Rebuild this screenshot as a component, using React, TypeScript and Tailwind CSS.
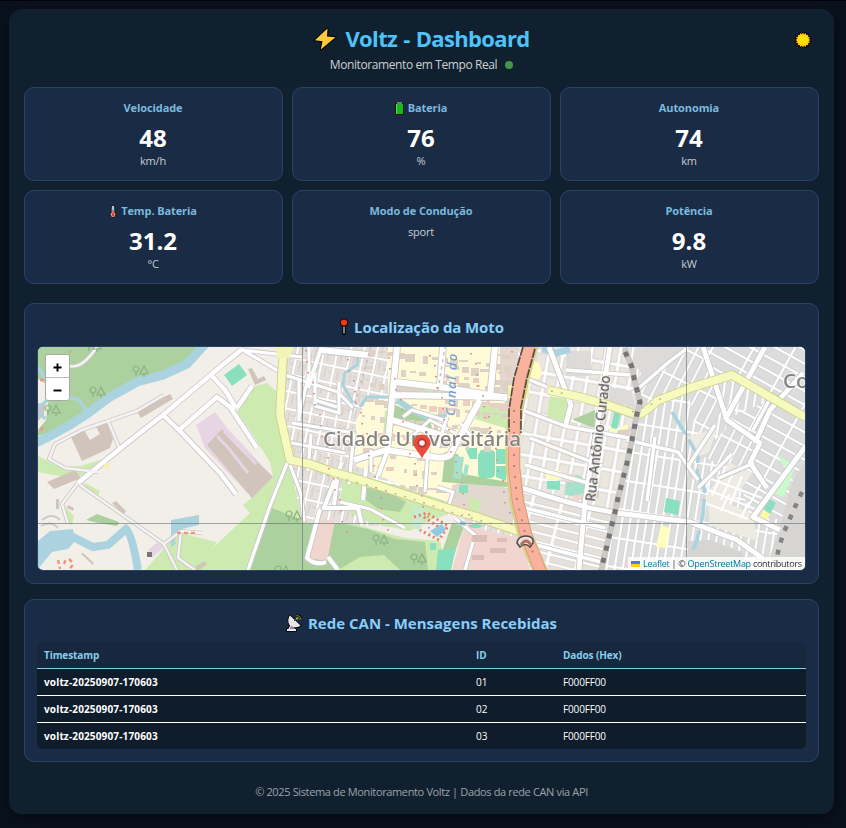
import type { ReactNode } from "react";

const outline = { stroke: "#000", strokeWidth: 2.4, strokeLinejoin: "round" as const, paintOrder: "stroke" as const };

function Bolt() {
  return (
    <svg className="h-6 w-6 shrink-0" viewBox="0 0 24 24">
      <path d="M14.500 1.500 1.800 13.200 9.500 14.200 7.800 22.500 22.500 10.200 14 9.400Z" fill="#ffc83d" {...outline} strokeWidth={2.2} />
    </svg>
  );
}

function Sun() {
  const points = Array.from({ length: 32 }, (_, i) => {
    const r = i % 2 ? 5.9 : 7.6;
    const a = (i * Math.PI) / 16;
    return `${9 + r * Math.cos(a)},${9 + r * Math.sin(a)}`;
  }).join(" ");
  return (
    <svg className="h-[18px] w-[18px]" viewBox="0 0 18 18">
      <polygon points={points} fill="#ffb900" {...outline} strokeWidth={1.8} />
      <circle cx="9" cy="9" r="5.4" fill="#ffe000" />
    </svg>
  );
}

function Battery() {
  return (
    <svg className="h-[13px] w-[9px]" viewBox="0 0 9 13">
      <rect x="0" y="1" width="9" height="12" rx="1" fill="#151515" />
      <rect x="2" y="0" width="5" height="2" fill="#777" />
      <rect x="1" y="2" width="7" height="10" fill="#16b91c" />
      <path d="M1.500 2v10" stroke="#5fd85f" />
    </svg>
  );
}

function Thermometer() {
  return (
    <svg className="h-[13px] w-[8px]" viewBox="0 0 8 13">
      <path d="M2.200 2a1.800 1.500 0 0 1 3.600 0v5.800a2.700 2.700 0 1 1-3.600 0Z" fill="#eee" stroke="#111" strokeWidth="1" />
      <path d="M4 2v3" stroke="#52c7e8" strokeWidth="1.500" />
      <path d="M4 5v5" stroke="#e8382c" strokeWidth="1.500" />
      <circle cx="4" cy="10" r="1.700" fill="#e8382c" />
    </svg>
  );
}

function PushPin() {
  return (
    <svg className="h-[18px] w-[10px]" viewBox="0 0 10 18">
      <path d="M5 7v8.500" stroke="#000" strokeWidth="3.400" strokeLinecap="round" />
      <path d="M5 7v8.500" stroke="#aaa" strokeWidth="1.500" />
      <circle cx="5" cy="4.500" r="3.700" fill="#f03a17" stroke="#000" />
    </svg>
  );
}

function Dish() {
  return (
    <svg className="h-[18px] w-[17px]" viewBox="0 0 17 18">
      <path d="M4 1.500C1.500 5 2 9.500 4.200 11.500L2.300 15H1v2h9v-2H8.500L8 13c2.500.5 5 0 6.500-1.500Z" fill="#e6e6e6" {...outline} strokeWidth={1.600} />
      <path d="m5 12 3 1 .4 2H3.500Z" fill="#998a87" />
      <path d="m8 7 3-3" stroke="#555" />
      <circle cx="11" cy="4.600" r="1" fill="#c8c52a" />
      <path d="M10.500 1.200c3 0 5 1.800 5 4.800" fill="none" stroke="#111" strokeWidth="2.200" />
      <path d="M10.500 1.500c2.800 0 4.500 1.700 4.500 4.500M11 3.200c1.400.1 2.100.9 2.200 2.300" fill="none" stroke="#75831e" />
    </svg>
  );
}

type P = { d: string; c: string; w?: number };

const areas: P[] = [
  { c: "#add19e", d: "M38 347H203L187 362 163 373 137 380 110 395 87 412 70 423 50 433 38 436Z" },
  { c: "#f2efe9", d: "M38 379 50 386 46 420 38 430Z" },
  { c: "#d0c4bb", d: "M38 403 45 405 44 415 38 421Z" },
  { c: "#cdebb0", d: "M38 456 60 467 80 466 104 459 95 473 70 478 38 472Z" },
  { c: "#cdebb0", d: "M252 387 267 383 277 392 277 418 287 455 297 482 302 520V570H207V553L250 513 243 505 253 497 273 477 270 462 253 435 237 412Z" },
  { c: "#cdebb0", d: "M145 570 167 545 178 532 196 537 217 542 207 555 220 570Z" },
  { c: "#add19e", d: "M272 508 302 520V570H248Z" },
  { c: "#add19e", d: "M86 520 97 514 119 522 117 526 98 523Z" },
  { c: "#cdebb0", d: "M83 482 100 491 98 496 86 488ZM63 505 74 516 72 525 67 523Z" },
  { c: "#88e0be", d: "M224 375 239 364 247 375 232 386Z" },
  { c: "#e8d5e4", d: "M196 425 215 412 227 428 273 477 252 498 205 448Z" },
  { c: "#e8d5e4", d: "M148 550 158 542 164 547 152 558Z" },
  { c: "#d0c4bb", d: "M207 445 222 429 273 477 252 498ZM248 369 252 368 258 379 264 376 266 380 255 385Z" },
  { c: "#d0c4bb", d: "M71 437 84 430 90 440 100 434 95 425 106 420 113 439 110 448 82 461Z" },
  { c: "#d0c4bb", d: "M47 482 75 470 81 478 54 489ZM137 412 170 394 173 399 141 418ZM112 503 116 501 126 511 123 515Z" },
  { c: "#d0c4bb", d: "M56 499h3v10h-3ZM68 505l6 3-1 3-6-3ZM83 553l11 10-1 2-12-11ZM195 567l9-6 3 3-9 7Z" },
  { c: "#aad3df", d: "M171 520 199 515V525L182 529 174 536 176 544 171 547ZM38 541 50 531 73 529 75 541 68 549 52 552 38 569Z" },
];

const urban: P[] = [
  { c: "#fffbd9", d: "M356 420 366 402 388 398V347H510V434L513 500 480 512 420 493 356 466Z" },
  { c: "#e3d8cf", d: "M452 485 475 479 511 489 513 529 452 506ZM500 347h18v50h-18Z" },
  { c: "#cdebb0", d: "M343 480 350 471 383 482 440 499 452 512 430 520 410 531 371 523 340 508Z" },
  { c: "#add19e", d: "M367 488 383 488 406 502 400 512 378 509 366 500Z" },
  { c: "#cdebb0", d: "M302 523 350 523 405 538 440 541 447 570H302Z" },
  { c: "#add19e", d: "M302 524 340 523 368 529 395 539 425 542 428 570H400L384 555 360 557 338 570H302Z" },
  { c: "#f1d6d0", d: "M319 519 335 521 327 561 308 558ZM464 526 520 538 530 570H452Z" },
  { c: "#c8ebcf", d: "M414 506 426 510 420 532 411 525Z" },
  { c: "#add19e", d: "M393 404 430 420 433 432 393 419ZM445 452 458 454 463 474 508 482V487L442 482ZM452 523 464 526 449 570H436Z" },
  { c: "#cdebb0", d: "M482 404 508 403 508 429 475 419ZM397 383 449 388 463 394 397 391ZM385 411h6v25h-8ZM470 497l12 4-3 11-10-3Z" },
  { c: "#88e0be", d: "M481 450h10q4 0 4 4v19q0 5-5 5h-7q-5 0-5-5v-18ZM496 449h10v15h-10ZM496 466h10v15l-10-4ZM465 448h12v11h-7ZM459 485h9v8h-9ZM438 550 456 548 451 570H436ZM472 523 482 525 480 528 471 528ZM430 543h6v7h-6Z" },
  { c: "#a7e1cc", d: "M455 456 464 457 461 479 453 478ZM465 464l4 1-2 12-4-2Z" },
  { c: "#cdebb0", d: "M550 396 572 400 571 423 547 417Z" },
  { c: "#add19e", d: "M574 419 595 410 597 429 573 420Z" },
  { c: "#88e0be", d: "M614 412 621 413 617 429 611 428ZM547 481 560 481 560 490 547 489ZM666 498 680 501 678 515 664 512Z" },
  { c: "#a7e1cc", d: "M566 475 579 475 586 481 586 491 578 497 565 495Z" },
  { c: "#f1d6d0", d: "M566 474h9v8h-9ZM573 495h10v5h-10Z" },
  { c: "#fffec0", d: "M546 468 561 471 561 480 546 479ZM610 427 617 430 627 424 629 434 608 435ZM661 525 670 528 666 548 656 547ZM531 360l8 3 3 12-8 8-7-4Z" },
  { c: "#ded0c7", d: "M618 430 631 429 628 437 616 436ZM588 491h11v7h-11Z" },
  { c: "#c8facc", d: "M777 455 795 465 791 479 784 497 773 493 785 469Z" },
  { c: "#88e0be", d: "M768 498 776 503 770 514 763 508Z" },
  { c: "#fffaa0", d: "M763 510 770 514 767 520 760 517Z" },
];

const roads: P[] = [
  { w: 4.4, c: "#fff", d: "M78 483 122 447 163 415 220 367 241 350M163 415 180 431 220 473 236 494M178 431 217 397 230 407 257 448M211 375 225 390 236 408M237 408 252 386" },
  { w: 2.4, c: "#f6f4f2", d: "M80 485 117 511 164 544 177 570M78 483 62 504 68 524M98 472 65 468 49 459 55 444 82 430 137 411 164 395M108 421 119 447M164 544 181 531 178 558 195 570M182 531 202 533M70 366Q82 369 97 347" },
  { w: 3.2, c: "#fff", d: "M241 349 285 375 338 392 355 410M242 350 302 357M288 461 270 506 248 570M290 465 301 494 304 521M309 347V373L299 417M292 423 354 433 349 484M315 373V406L339 413V382M315 400 337 407M299 379V421M286 442 345 453M311 434 308 471" },
  { w: 4, c: "#fff", d: "M321 348 308 388M342 462 324 508 358 508 362 525M334 505 337 480M320 509 307 558Q316 566 326 562M328 557 338 570M378 476 387 452M366 468 363 500" },
  { w: 6, c: "#fff", d: "M397 347 387 452M443 347 440 385M495 347 490 397M396 382 447 388 507 398M395 395 507 397M480 400 450 455Q444 459 433 457L386 450 354 460M392 420 448 437M320 350 368 355" },
  { w: 3, c: "#fff", d: "M403 417 412 410 444 420M410 438 430 420 455 433M447 417 438 447M460 423 472 437M428 450 425 492M437 487 453 492 447 511M371 450V472M455 518 475 535 465 570M340 502 370 509 405 528" },
  { w: 4.8, c: "#fff", d: "M522 488 560 500 590 508 617 513 690 522 737 540 765 560 785 570M703 347 727 420 760 443 750 463 767 488M765 347 725 420M805 447 753 517 780 530M610 347 585 502 579 570M549 347 571 405 565 427M803 373 770 410 755 443" },
  { w: 3.4, c: "#fff", d: "M525 411 565 426 629 438M525 378 547 387M566 370 630 375M633 393 670 361 685 350M530 438 602 466M525 465 595 485M627 440 678 452 698 480M754 463 719 478M732 454 698 488M715 425 687 468M753 430 771 397M655 437 647 501M522 507 605 528M521 541 601 562" },
];

const secondary: P[] = [
  { w: 7.6, c: "#f7fabf", d: "M284 345 282 372 280 415 290 460 310 464 333 472 367 482 413 497 447 508 480 518 518 531M548 390 580 397 608 405 637 415Q646 412 657 401L690 388 732 375 805 417" },
];

const speckles = Array.from({ length: 130 }, (_, i) => ({
  x: 360 + ((i * 47) % 148),
  y: 349 + ((i * 71) % 148),
  w: 3 + ((i * 5) % 9),
  h: 2 + ((i * 3) % 7),
  fill: i % 5 === 0 ? "#ead0c4" : "#ddd2c4",
}));

const dots = Array.from({ length: 90 }, (_, i) => ({
  x: 305 + ((i * 61) % 210),
  y: 350 + ((i * 83) % 183),
}));

function Roads({ list, casing }: { list: P[]; casing: string }) {
  return (
    <g fill="none" strokeLinejoin="round">
      {list.map((r) => <path key={r.d} d={r.d} stroke={casing} strokeWidth={(r.w ?? 3) + 1.8} />)}
      {list.map((r) => <path key={r.d + "f"} d={r.d} stroke={r.c} strokeWidth={r.w} />)}
    </g>
  );
}

function Tree({ x, y }: { x: number; y: number }) {
  return <path transform={`translate(${x} ${y})`} d="M3 10V5M3 6a3 3 0 1 1 .1 0M11 11V7M11 0l-4 8h8Z" fill="none" stroke="#8bb082" strokeWidth="1.200" />;
}

function MapDrawing() {
  return (
    <svg className="block h-full w-full" viewBox="38 347 767 223" preserveAspectRatio="none">
      <defs>
        <pattern id="blocksWest" width="13" height="17" patternUnits="userSpaceOnUse" patternTransform="rotate(12)">
          <rect width="13" height="17" fill="#fff" />
          <rect x="1.500" y="1.500" width="10" height="14" fill="#e5e0dc" stroke="#d3cfcb" strokeWidth=".7" />
          <path d="M5 3v10M8 6h3" stroke="#d2c8c0" />
        </pattern>
        <pattern id="blocksMid" width="14" height="21" patternUnits="userSpaceOnUse" patternTransform="rotate(10)">
          <rect width="14" height="21" fill="#fff" />
          <rect x="2" y="2" width="10" height="17" fill="#ebe6df" stroke="#d2d0cf" strokeWidth=".9" />
        </pattern>
        <pattern id="blocksSouth" width="29" height="9" patternUnits="userSpaceOnUse" patternTransform="rotate(14)">
          <rect width="29" height="9" fill="#fff" />
          <rect x="2" y="1.500" width="25" height="6" fill="#e5e0da" stroke="#d2d0cf" strokeWidth=".7" />
        </pattern>
        <pattern id="blocksRail" width="8" height="29" patternUnits="userSpaceOnUse" patternTransform="rotate(9)">
          <rect width="8" height="29" fill="#fff" />
          <rect x="1.300" y="1.500" width="5.200" height="26" fill="#dddddc" stroke="#cecece" strokeWidth=".6" />
        </pattern>
        <pattern id="blocksEast" width="36" height="12" patternUnits="userSpaceOnUse" patternTransform="rotate(29)">
          <rect width="36" height="12" fill="#fff" />
          <rect x="1.500" y="1.500" width="33" height="9" fill="#dcdcdc" stroke="#cccccc" strokeWidth=".7" />
        </pattern>
        <pattern id="blocksSteep" width="30" height="10" patternUnits="userSpaceOnUse" patternTransform="rotate(117)">
          <rect width="30" height="10" fill="#fff" />
          <rect x="1.500" y="1.300" width="27" height="7.400" fill="#dddddc" stroke="#cccccc" strokeWidth=".7" />
        </pattern>
        <filter id="soft"><feGaussianBlur stdDeviation=".75" /></filter>
        <filter id="softLabel"><feGaussianBlur stdDeviation=".5" /></filter>
      </defs>
      <rect x="38" y="347" width="767" height="223" fill="#f2efe9" />
      <g filter="url(#soft)">
        {areas.map((a) => <path key={a.d} d={a.d} fill={a.c} />)}
        <path d="M217 436 230 450 248 473M224 431 256 464" fill="none" stroke="#e8d5e4" strokeWidth="3" />
        <g fill="none" stroke="#aad3df">
          <path d="M208 341 187 364 163 375 137 382 110 397 87 414 70 425 50 436 36 443" strokeWidth="9" />
          <path d="M38 408 50 398H72L79 400 87 412M38 410 45 419M38 367 45 378" strokeWidth="3.500" />
          <path d="M71 536 93 547 108 545 126 529Q132 534 138 570" strokeWidth="8" />
        </g>
        <path d="M284 347H525L513 500 545 573H500L460 512 400 527 302 523 290 462 280 415Z" fill="url(#blocksWest)" />
        <path d="M525 347H650L637 410 600 570H540L515 500 513 438Z" fill="url(#blocksMid)" />
        <path d="M516 487 620 514 602 570H541Z" fill="url(#blocksSouth)" />
        <path d="M630 347H805V570H600L637 414Z" fill="url(#blocksRail)" />
        <path d="M690 347H805V520L750 518 724 420 770 400 732 375 709 381Z" fill="url(#blocksEast)" />
        <path d="M636 347H702L722 412 700 440 687 390 643 404ZM730 425 758 443 742 475 700 455Z" fill="url(#blocksSteep)" />
        <path d="M566 351h25v25h-25ZM601 385 631 391 636 408 604 400ZM642 347h43l-38 34-15-20Z" fill="#dcdbda" />
        <path d="M728 462 752 473 729 507 704 500ZM688 437 717 428 709 452 695 458ZM707 496 752 513 758 541 710 525Z" fill="#eeebe3" />
        <path d="M793 480 805 461V570H765L775 542ZM688 541 710 540 742 552 750 570H688Z" fill="#d7d5d3" />
        <path d="M702 502 748 519M706 489 755 509M711 479 762 498M721 511 729 494M740 519 749 502M718 464 704 491M726 466 712 495M734 470 721 500M742 476 730 505" stroke="#fff" strokeWidth="2" />
        {urban.map((a) => <path key={a.d} d={a.d} fill={a.c} />)}
        {speckles.map((s, i) => <rect key={i} x={s.x} y={s.y > 445 && s.x > 438 ? s.y - 92 : s.y} width={s.w} height={s.h} fill={s.fill} />)}
        <g fill="none" stroke="#aad3df" strokeWidth="3">
          <path d="M358 355 357 365 345 373 343 385 353 403M360 407 367 397 400 397" />
          <path d="M397 400 415 412 430 418 447 417" strokeWidth="6" />
          <path d="M542 349 556 353 570 349" strokeWidth="7" />
          <path d="M672 412 685 433 693 447 698 457 697 473 705 490 703 515 697 540 693 550" strokeWidth="3.500" strokeDasharray="26 6" />
        </g>
        <Roads list={roads} casing="#cbc9c9" />
        <path d="M353 410 371 347M438 390 445 347" stroke="#c7bac4" strokeWidth="1.500" strokeDasharray="3 4" />
        <Roads list={secondary} casing="#cfd08c" />
        <path d="M275 347h18l-3 11h-13ZM508 385h12v28h-10ZM521 379h8v18l-8 5Z" fill="#f1f4b5" />
        <path d="M327 475 367 485 413 499 447 511 500 526M632 412 650 405 662 398M551 391 566 394" fill="none" stroke="#bfb88b" strokeWidth="1.500" strokeDasharray="2 8" />
        <path d="M531 345 522 378 516 408 513 438V468L517 502 525 535 542 575" fill="none" stroke="#d8cf8a" strokeWidth="15" />
        <path d="M529 345 520 378 515 408 514 438V468L518 502 526 535 542 575" fill="none" stroke="#dd937e" strokeWidth="12" />
        <path d="M529 345 520 378 515 408 514 438V468L518 502 526 535 542 575" fill="none" stroke="#f9b29c" strokeWidth="10.500" />
        <path d="M523 347 514 378 509 410V432M535 349 527 378 521 407V433" fill="none" stroke="#54493f" strokeWidth="1.600" strokeDasharray="9 1.500" />
        <path d="M514 410V465L517 500 525 533 534 555" fill="none" stroke="#bc8076" strokeWidth="2" strokeDasharray="2 9" />
        <path d="M517 543q1-7 9-7t7 7l-3 4q-5-5-10 0Z" fill="#e9e3df" stroke="#4d4947" strokeWidth="1.500" />
        <path d="M521 545q5-8 10 0" fill="none" stroke="#b86c5c" strokeWidth="3" />
        <path d="M625 348 627 355 632 367 634 378 640 402 637 414 632 440 627 463 618 498 615 512 609 537 603 562 601 572" fill="none" stroke="#cbc7c5" strokeWidth="6" />
        <path d="M625 352 632 367 634 378 640 402 637 414 632 440 627 463 618 498 615 512 609 537 603 562 601 572" fill="none" stroke="#777575" strokeWidth="5" strokeDasharray="5 7.500" />
        <path d="M802 492 795 507 784 532 779 547 775 568" fill="none" stroke="#858383" strokeWidth="4.500" strokeDasharray="5 7.500" />
        {dots.map((d, i) => <rect key={i} x={d.x} y={d.y} width="2" height="1.500" fill={i % 3 ? "#f2947c" : "#bd9cbb"} />)}
        <path d="M414 517 427 513 448 526 439 540 420 530M424 517 443 530" fill="none" stroke="#e88067" strokeWidth="3" strokeDasharray="2 3" />
        <path d="M430 531l12-7 4 6-9 7ZM460 521l6 1-1 4-5-1Z" fill="#8fcbe1" />
        <path d="M472 535h15v7h-15ZM490 548h16v5h-16ZM472 555h12v5h-12ZM497 538h10v4h-10Z" fill="#d9bfb8" />
        <path d="M177 533h20M40 430l4-3M40 380h4M69 352h2M58 560l2 9M64 564l2-5M69 559l4 4M70 568l3-3" stroke="#ee967f" strokeWidth="2.500" strokeDasharray="4 3" />
        <path d="M42 520Q52 512 60 520M41 526Q51 520 58 528" fill="none" stroke="#ccc" strokeWidth="2" />
        <path d="M147 552h5v5h-5Z" fill="#777" />
        <Tree x={90} y={387} /><Tree x={45} y={405} /><Tree x={133} y={366} /><Tree x={86} y={341} /><Tree x={286} y={511} /><Tree x={275} y={566} /><Tree x={373} y={535} /><Tree x={411} y={554} />
        <path d="M103 464l4-1 3 4-3 3Z" fill="#f5f2a8" />
      </g>
      <g fontFamily="'Noto Sans', sans-serif" fontWeight="500" paintOrder="stroke" stroke="#fff" strokeOpacity=".6" strokeWidth="2.500" strokeLinejoin="round" filter="url(#softLabel)">
        <text x="323" y="446" fontSize="20.500" textLength="198" fill="#868380">Cidade Universitária</text>
        <text x="783" y="388" fontSize="20.500" fill="#868380">Co</text>
        <text transform="translate(595 502) rotate(-83)" fontSize="13.500" textLength="127" fill="#575452" strokeWidth="2">Rua Antônio Curado</text>
        <text transform="translate(455 416) rotate(-88)" fontSize="13" fontStyle="italic" textLength="76" fill="#6794c5" strokeWidth="1">Canal do C</text>
      </g>
      <path d="M302.500 347v223M686.500 347v223M38 523.500h767" stroke="#6d7777" strokeOpacity=".65" strokeWidth="1" />
      <path d="M422 458.500C420 453 413.500 448.500 413.500 443a8.500 8.500 0 0 1 17 0c0 5.500-6.500 10-8.500 15.500Z" fill="#e74c3c" />
      <circle cx="422" cy="443" r="4.700" fill="#c0392b" />
      <circle cx="422" cy="443" r="2.800" fill="#eef0f1" />
    </svg>
  );
}

function Card({ title, icon, value, unit }: { title: string; icon?: ReactNode; value?: string; unit: string }) {
  return (
    <div className="h-[94px] rounded-[10px] border border-[#2a4365] bg-[#1a2c45] pr-px pt-3 text-center">
      <h3 className="flex h-4 items-center justify-center gap-1 text-[11px] font-bold leading-4 tracking-[-0.1px] text-[#7bb9de]">
        {icon}<span>{title}</span>
      </h3>
      {value && <p className="mt-[7px] h-[30px] text-[24px] font-bold leading-[30px] text-white">{value}</p>}
      <p className={`text-[11px] leading-[14px] tracking-[-0.2px] text-[#c5cbd2] ${value ? "mt-px" : "mt-1.5"}`}>{unit}</p>
    </div>
  );
}

export default function App() {
  return (
    <div className="flex h-[828px] w-[846px] items-start border-t border-[#02030f] bg-[#0a121e] pl-[9px] pt-2 font-['Open_Sans',sans-serif]">
      <main className="h-[805px] w-[825px] rounded-[13px] bg-[#11202f] px-[15px] shadow-[0_5px_20px_rgba(0,0,0,0.5)]">
        <header className="relative h-[78px] pt-4">
          <h1 className="flex h-[27px] items-center justify-center gap-2 text-[22px] font-bold leading-[27px] tracking-[-0.65px] text-[#4fc3f7]">
            <Bolt /><span className="[word-spacing:1px]">Voltz - Dashboard</span>
          </h1>
          <p className="mt-1 flex h-[18px] items-center justify-center gap-2 text-[12px] leading-[18px] tracking-[-0.4px] text-[#cbd0d3]">
            <span>Monitoramento em Tempo Real</span>
            <i className="h-2 w-2 rounded-full bg-[#43964b]" />
          </p>
          <button className="absolute right-[7px] top-[22px]" aria-label="Tema"><Sun /></button>
        </header>
        <section className="grid grid-cols-3 gap-[9px]">
          <Card title="Velocidade" value="48" unit="km/h" />
          <Card title="Bateria" icon={<Battery />} value="76" unit="%" />
          <Card title="Autonomia" value="74" unit="km" />
          <Card title="Temp. Bateria" icon={<Thermometer />} value="31.2" unit="°C" />
          <Card title="Modo de Condução" unit="sport" />
          <Card title="Potência" value="9.8" unit="kW" />
        </section>
        <section className="mt-[19px] h-[281px] rounded-[10px] border border-[#2a4365] bg-[#1a2c45] px-[12px] pt-3">
          <h2 className="flex h-[22px] items-center justify-center gap-[5px] text-[15px] font-bold leading-[22px] tracking-[-0.1px] text-[#87cefa]">
            <PushPin /><span>Localização da Moto</span>
          </h2>
          <div className="relative mt-2 h-[225px] overflow-hidden rounded-[6px] border border-[#2a4365]">
            <MapDrawing />
            <div className="absolute left-[7px] top-[7px] w-[25px] rounded-[3px] border border-[#aaa] bg-white text-black">
              <div className="flex h-[23px] items-center justify-center border-b border-[#bbb] pt-[3px]"><svg width="9" height="9"><path d="M4.500 .5v8M.5 4.500h8" stroke="#000" strokeWidth="1.900" /></svg></div>
              <div className="flex h-[22px] items-center justify-center pt-[3px]"><svg width="9" height="9"><path d="M.5 4.500h8" stroke="#000" strokeWidth="1.900" /></svg></div>
            </div>
            <div className="absolute bottom-0 right-0 flex h-[13px] w-[177px] items-center whitespace-nowrap bg-white/80 px-[3px] text-[9px] leading-[13px] text-[#333]">
              <svg className="mr-[3px] h-[6px] w-[9px]" viewBox="0 0 9 6"><path d="M0 0h9v3H0Z" fill="#4c7be1" /><path d="M0 3h9v3H0Z" fill="#ffd500" /></svg>
              <span className="tracking-[-0.27px]"><span className="text-[#0078a8]">Leaflet</span> | © <span className="text-[#0078a8]">OpenStreetMap</span> contributors</span>
            </div>
          </div>
        </section>
        <section className="mt-[15px] h-[163px] rounded-[10px] border border-[#2a4365] bg-[#1a2c45] px-[12px] pt-3">
          <h2 className="flex h-[22px] items-center justify-center gap-[5px] text-[15px] font-bold leading-[22px] text-[#87cefa]">
            <Dish /><span>Rede CAN - Mensagens Recebidas</span>
          </h2>
          <table className="mt-2 w-full table-fixed border-separate border-spacing-0 overflow-hidden rounded-[6px] text-left text-[10px] leading-[14px]">
            <colgroup><col className="w-[432px]" /><col className="w-[87px]" /><col /></colgroup>
            <thead className="bg-[#17273e] text-[#87ceeb]">
              <tr className="h-[27px]">
                {["Timestamp", "ID", "Dados (Hex)"].map((h) => <th key={h} className="border-b border-[#87ceeb] px-[7px] py-0 font-bold tracking-[-0.1px]">{h}</th>)}
              </tr>
            </thead>
            <tbody className="bg-[#0e1c2b] text-white">
              {["01", "02", "03"].map((id, i) => {
                const line = i < 2 ? "border-b border-white px-[7px] py-0" : "px-[7px] py-0";
                return (
                  <tr key={id} className={i < 2 ? "h-[27px]" : "h-[26px]"}>
                    <td className={`${line} font-bold tracking-[0.15px]`}>voltz-20250907-170603</td>
                    <td className={line}>{id}</td>
                    <td className={`${line} tracking-[-0.15px]`}>F000FF00</td>
                  </tr>
                );
              })}
            </tbody>
          </table>
        </section>
        <footer className="mt-[22px] text-center text-[11px] leading-4 tracking-[-0.36px] text-[#9ca2a9]">
          © 2025 Sistema de Monitoramento Voltz | Dados da rede CAN via API
        </footer>
      </main>
    </div>
  );
}
